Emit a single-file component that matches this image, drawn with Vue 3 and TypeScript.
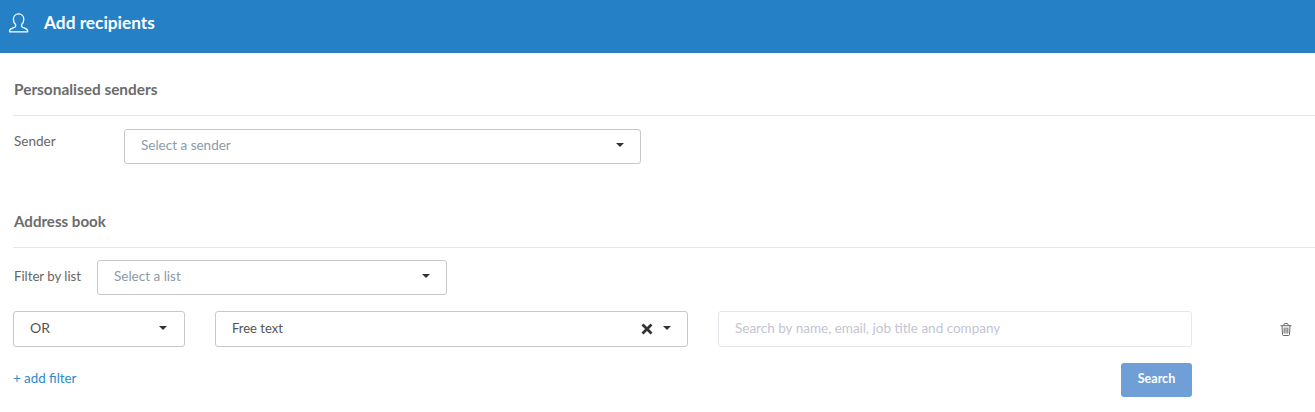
<script setup lang="ts">
const title = 'Add recipients'
</script>

<template>
  <div class="page">
    <header class="bar">
      <svg class="user" width="22" height="20" viewBox="0 0 22 20" fill="none" stroke="#fff" stroke-width="1.3" stroke-linejoin="round">
        <path d="M7.600 11.600c-1.400-1.300-2.200-3.300-2.200-5.400C5.400 3 7.700.9 10.600.9s5.200 2.100 5.200 5.300c0 2.100-.8 4.100-2.200 5.400v1.600c0 .7 1 1.100 2.400 1.600 2.200.8 3.600 1.500 3.600 2.900v1.100H1.600v-1.100c0-1.400 1.400-2.100 3.600-2.900 1.400-.5 2.400-.9 2.400-1.600z" />
      </svg>
      <span class="bar-title">{{ title }}</span>
    </header>

    <main class="content">
      <section class="senders">
        <h2 class="heading">Personalised senders</h2>
        <div class="sender-row">
          <label class="sender-label">Sender</label>
          <div class="select sender-select">
            <span class="placeholder">Select a sender</span>
            <i class="caret"></i>
          </div>
        </div>
      </section>

      <section class="book">
        <h2 class="heading">Address book</h2>
        <div class="list-row">
          <label class="list-label">Filter by list</label>
          <div class="select list-select">
            <span class="placeholder">Select a list</span>
            <i class="caret"></i>
          </div>
        </div>

        <div class="filter-row">
          <div class="select or-select">
            <span class="value or-value">OR</span>
            <i class="caret"></i>
          </div>
          <div class="select type-select">
            <span class="value">Free text</span>
            <svg class="clear" width="12" height="12" viewBox="0 0 12 12" stroke="#333" stroke-width="2.800">
              <path d="M1.500 1.500l9 9M10.500 1.500l-9 9" />
            </svg>
            <i class="caret"></i>
          </div>
          <input class="search-input" type="text" placeholder="Search by name, email, job title and company" />
          <div class="trash-cell">
            <svg width="12" height="13" viewBox="0 0 12 13" fill="none" stroke="#666" stroke-width="1">
              <path d="M.5 2.700h11M2 2.700l.5 8.800c0 .6.400 1 1 1h5c.6 0 1-.4 1-1l.5-8.800M4 2.500V1.200c0-.4.300-.7.700-.7h2.600c.4 0 .7.300.7.700v1.300M4.200 4.500v6M6 4.500v6M7.800 4.500v6" />
            </svg>
          </div>
        </div>

        <div class="action-row">
          <a class="add-link">+ add filter</a>
          <button class="search-btn" type="button">Search</button>
        </div>
      </section>
    </main>
  </div>
</template>

<style scoped>
.page {
  width: 1315px;
  height: 412px;
  overflow: hidden;
  background: #fff;
  font-family: "Lato", "Noto Sans", sans-serif;
  font-size: 13.5px;
  color: #666;
}
.bar {
  height: 53px;
  box-sizing: border-box;
  padding: 0 0 8px 8px;
  background: #2580c5;
  display: flex;
  align-items: center;
}
.user { display: block; }
.bar-title {
  margin-left: 14px;
  color: #fff;
  font-size: 17.300px;
  font-weight: 700;
}
.content { padding-left: 13px; }
.heading {
  margin: 0;
  box-sizing: border-box;
  border-bottom: 1px solid #e4e6e8;
  padding-left: 1px;
  color: #6c6c6c;
  font-size: 15.400px;
  font-weight: 700;
  line-height: 20px;
}
.senders { height: 138px; }
.senders .heading { height: 63px; padding-top: 26px; }
.book .heading { height: 57px; padding-top: 20px; font-size: 15.100px; }
.select {
  box-sizing: border-box;
  height: 35px;
  display: flex;
  align-items: center;
  padding: 0 16px 3px;
  background: #fff;
  border: 1px solid #c8c8c8;
  border-radius: 3px;
}
.placeholder { flex: 1; color: #8b9ba8; }
.value { flex: 1; color: #555; font-size: 13px; }
.or-value { font-size: 14px; }
.caret {
  width: 0;
  height: 0;
  border-left: 4.500px solid transparent;
  border-right: 4.500px solid transparent;
  border-top: 4.500px solid #333;
}
.or-select .caret { margin-right: 1px; }
.sender-row { display: flex; padding-top: 13px; }
.sender-label { width: 110px; padding-left: 1px; line-height: 24px; }
.sender-select { width: 517px; }
.list-row {
  display: flex;
  align-items: center;
  padding-top: 12px;
}
.list-label { width: 83px; padding-left: 1px; padding-bottom: 3px; font-size: 13.200px; }
.list-select { width: 350px; }
.filter-row {
  display: flex;
  padding-top: 16px;
}
.or-select { width: 172px; height: 36px; }
.type-select { width: 473px; height: 36px; margin-left: 30px; }
.clear { margin-right: 10px; margin-top: 3px; }
.search-input {
  box-sizing: border-box;
  width: 474px;
  height: 36px;
  margin-left: 30px;
  padding: 0 16px 3px;
  border: 1px solid #e2e8ec;
  border-radius: 3px;
  font: inherit;
  outline: none;
}
.search-input::placeholder { color: #c3c5d2; opacity: 1; }
.trash-cell {
  margin-left: 88px;
  width: 12px;
  display: flex;
  align-items: center;
}
.action-row {
  display: flex;
  align-items: flex-start;
  justify-content: space-between;
  width: 1179px;
  padding-top: 16px;
}
.add-link { color: #2d8ad0; line-height: 30px; font-size: 13.300px; }
.search-btn {
  width: 71px;
  height: 34px;
  padding: 0 0 3px;
  border: 0;
  border-radius: 3px;
  background: #6f9fd6;
  color: #fff;
  font: 700 12.500px "Lato", sans-serif;
}
</style>
